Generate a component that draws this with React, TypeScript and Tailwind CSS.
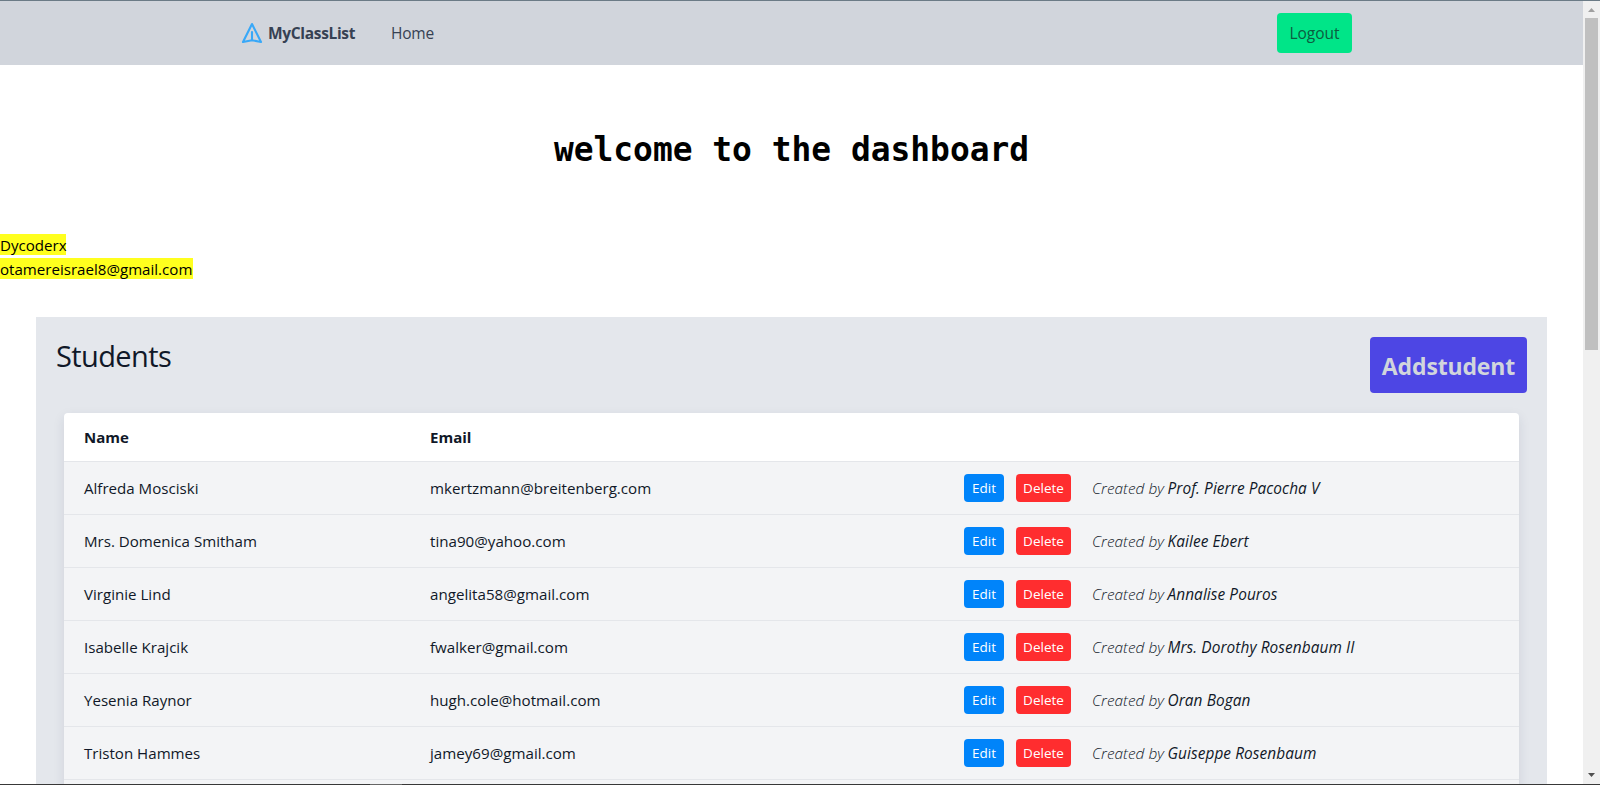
const students = [
  { name: "Alfreda Mosciski", email: "mkertzmann@breitenberg.com", creator: "Prof. Pierre Pacocha V" },
  { name: "Mrs. Domenica Smitham", email: "tina90@yahoo.com", creator: "Kailee Ebert" },
  { name: "Virginie Lind", email: "angelita58@gmail.com", creator: "Annalise Pouros" },
  { name: "Isabelle Krajcik", email: "fwalker@gmail.com", creator: "Mrs. Dorothy Rosenbaum II" },
  { name: "Yesenia Raynor", email: "hugh.cole@hotmail.com", creator: "Oran Bogan" },
  { name: "Triston Hammes", email: "jamey69@gmail.com", creator: "Guiseppe Rosenbaum" },
];

function Navbar() {
  return (
    <nav className="flex h-16 shrink-0 items-center bg-[#d1d5dc] pr-[231px] pl-[241px] text-[#364153]">
      <a className="flex items-center" href="#">
        <svg className="h-[22px] w-[22px]" viewBox="0 0 22 22" fill="none" stroke="#38a8f8" strokeWidth="2.1" strokeLinejoin="round" strokeLinecap="round">
          <path d="M11 2 L20 20 L11 18.200 L2 20 Z M11 18 V10" />
        </svg>
        <span className="ml-[5px] w-[88px] pt-0.5 text-[15.500px] font-bold tracking-[-0.33px]">MyClassList</span>
      </a>
      <a className="ml-[35px] pt-0.5 text-[15.500px] tracking-[-0.2px]" href="#">Home</a>
      <button className="ml-auto h-10 w-[75px] rounded bg-[#00e588] pt-0.5 text-[15.500px] text-[#0c5c40]">Logout</button>
    </nav>
  );
}

function StudentRow({ name, email, creator }: { name: string; email: string; creator: string }) {
  return (
    <div className="grid h-[53px] shrink-0 grid-cols-[346px_534px_128px_1fr] items-center border-t border-[#e4e6ea] bg-[#f3f4f6] pl-5">
      <span className="text-[15.100px]">{name}</span>
      <span className="text-[15.150px]">{email}</span>
      <div className="flex gap-3">
        <button className="h-7 w-10 rounded bg-[#0084fa] text-[13.500px] text-white">Edit</button>
        <button className="h-7 w-[55px] rounded bg-[#ff2d2f] text-[13.500px] text-white">Delete</button>
      </div>
      <div className="flex pt-0.5 text-[15.400px] italic">
        <span className="w-[75.500px] font-light">Created by</span>
        <span className="tracking-[0.08px]">{creator}</span>
      </div>
    </div>
  );
}

export default function App() {
  return (
    <div className="flex h-[785px] w-[1600px] flex-col overflow-hidden bg-white font-['Open_Sans',sans-serif] text-[15px] whitespace-nowrap">
      <div className="h-px shrink-0 bg-[#6b7b86]" />
      <div className="flex min-h-0 flex-1">
        <div className="flex min-w-0 flex-1 flex-col overflow-hidden">
          <Navbar />
          <h1 className="mt-[65px] text-center font-['DejaVu_Sans_Mono',monospace] text-[32.900px] leading-10 font-bold text-black">welcome to the dashboard</h1>
          <div className="mt-[64px] flex flex-col items-start gap-[3px] text-black">
            <mark className="h-[21px] w-[66px] bg-[#ffff1e] text-[15.100px] leading-[22px]">Dycoderx</mark>
            <mark className="h-[21px] w-[193px] bg-[#ffff1e] text-[15.100px] leading-[22px]">otamereisrael8@gmail.com</mark>
          </div>
          <main className="mx-9 mt-[38px] flex min-h-0 flex-1 flex-col overflow-hidden bg-[#e4e7ec] text-[#101828]">
            <div className="flex h-[96px] shrink-0 items-start justify-between px-5 pt-5">
              <h2 className="text-[29px] leading-[38px] tracking-[-0.6px]">Students</h2>
              <button className="h-14 w-[157px] rounded bg-[#4d46e4] pt-0.5 text-[23px] font-bold tracking-[-0.15px] text-[#d1d5dc]">Addstudent</button>
            </div>
            <section className="mx-7 flex flex-col rounded-t bg-white shadow-[0_4px_12px_rgba(30,40,80,0.10)]">
              <div className="grid h-12 shrink-0 grid-cols-[346px_1fr] items-center pl-5 font-bold">
                <span>Name</span>
                <span>Email</span>
              </div>
              {students.map((s) => <StudentRow key={s.email} {...s} />)}
              <div className="h-[53px] shrink-0 border-t border-[#e4e6ea] bg-[#f3f4f6]" />
            </section>
          </main>
        </div>
        <div className="flex w-[17px] shrink-0 flex-col items-center bg-[#f0f0f0]">
          <svg className="h-[17px] w-[17px] shrink-0" viewBox="0 0 17 17"><path d="M5 11h7L8.500 7Z" fill="#a0a0a0" /></svg>
          <div className="h-[332px] w-[13px] bg-[#c0c0c0]" />
          <svg className="mt-auto h-[17px] w-[17px] shrink-0" viewBox="0 0 17 17"><path d="M5 6h7L8.500 10Z" fill="#505050" /></svg>
        </div>
      </div>
      <div className="flex h-px shrink-0 bg-[#383838] pl-[370px]"><div className="h-px w-8 bg-[#666]" /></div>
    </div>
  );
}
